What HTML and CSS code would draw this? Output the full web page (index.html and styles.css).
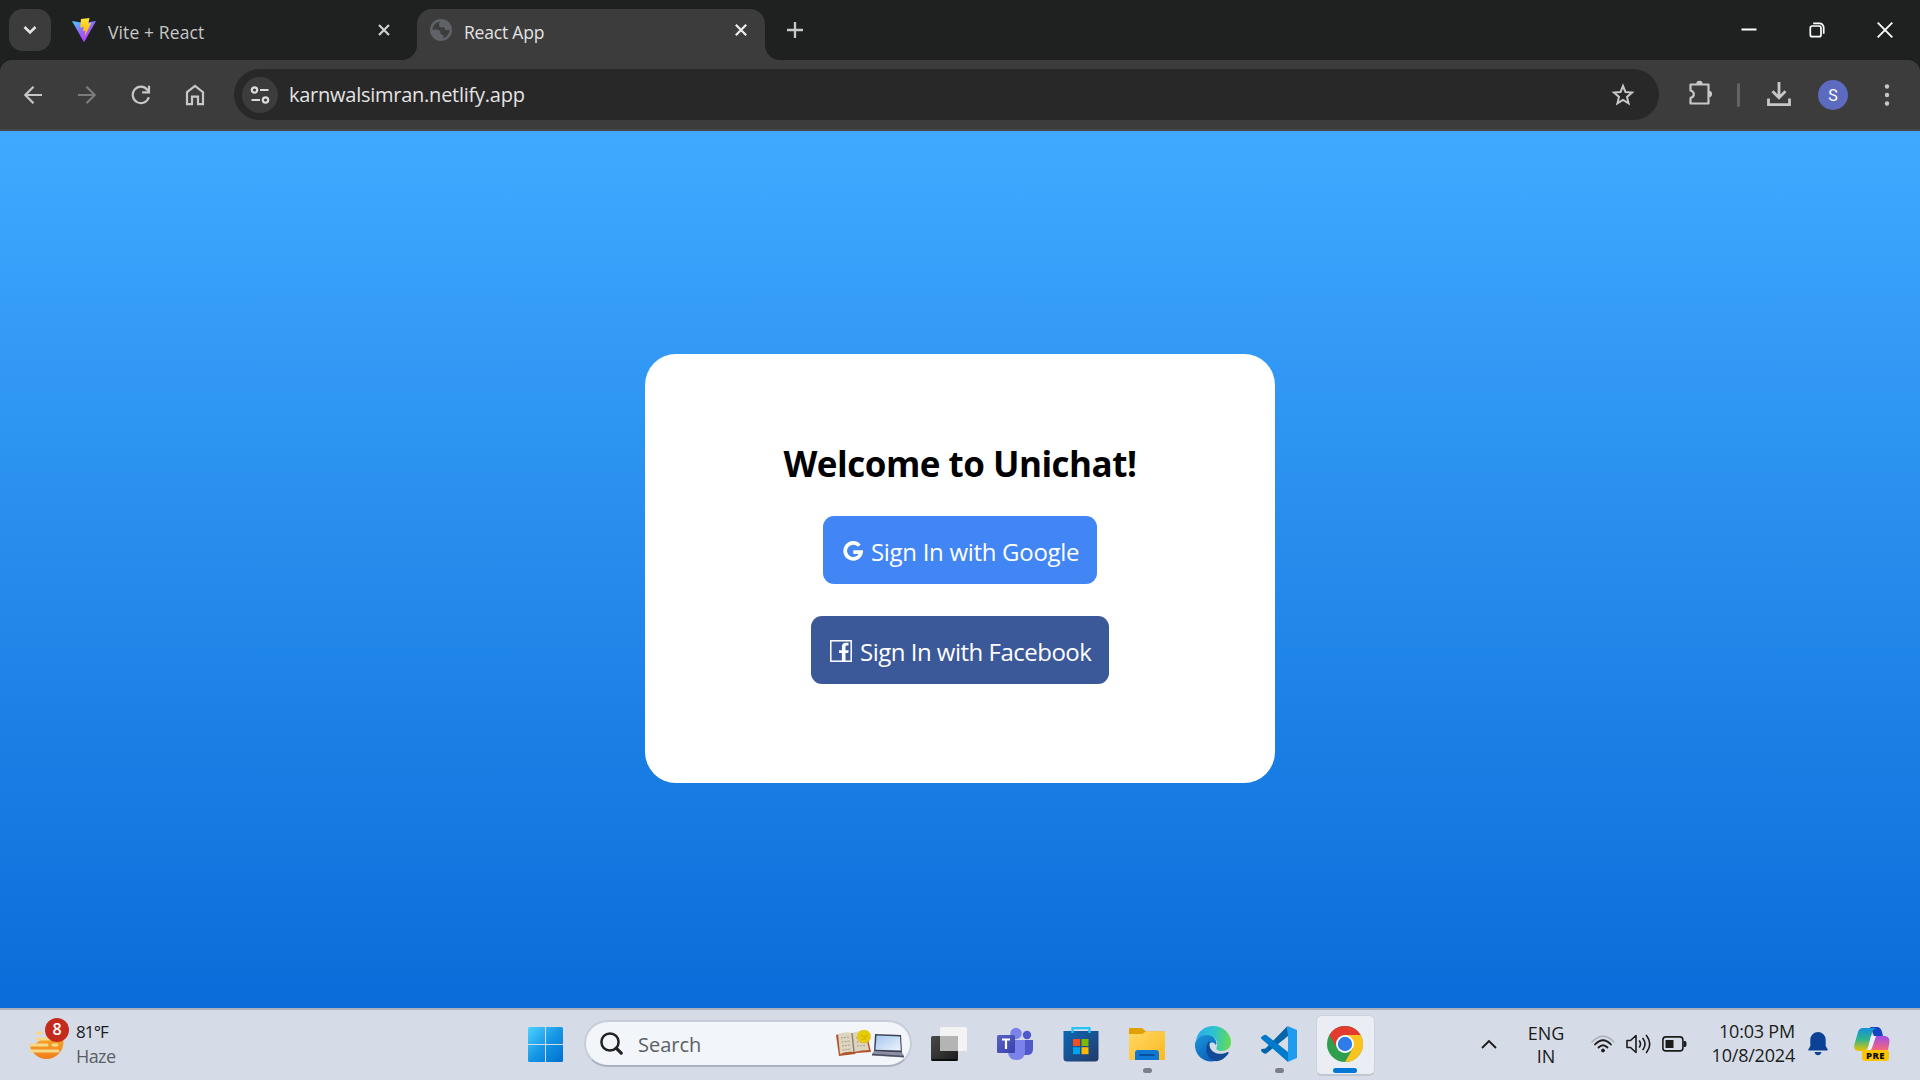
FILE: index.html
```html
<!DOCTYPE html>
<html lang="en">
<head>
<meta charset="utf-8">
<title>React App</title>
<link rel="stylesheet" href="styles.css">
</head>
<body>
<div class="screen">
  <header class="tabstrip">
    <div class="tab-search"><svg width="14" height="10" viewBox="0 0 14 10"><path d="M1.500 2l5.500 5.500L12.500 2" fill="none" stroke="#e3e3e3" stroke-width="2.600"/></svg></div>
    <div class="tab">
      <svg width="24" height="24" viewBox="0 0 24 24">
        <defs>
          <linearGradient id="va" x1="0" y1="0" x2=".6" y2="1"><stop offset="0" stop-color="#41d1ff"/><stop offset=".5" stop-color="#8f6cff"/><stop offset="1" stop-color="#bd34fe"/></linearGradient>
          <linearGradient id="vb" x1="0" y1="0" x2="0" y2="1"><stop offset="0" stop-color="#ffe83d"/><stop offset="1" stop-color="#ffa800"/></linearGradient>
        </defs>
        <path d="M0 3l12 2 12-2-11.5 20.6q-.5.8-1 0z" fill="url(#va)"/>
        <path d="M9 1l8.5-1-1.2 5.4 3-.6-6.6 14 .8-6.3-2.6.7.8-4.4-3.5.8z" fill="url(#vb)"/>
      </svg>
      <span class="tab-title tab-title-vite">Vite + React</span>
      <svg class="tab-close" width="12" height="12" viewBox="0 0 12 12"><path d="M1 1l10 10M11 1L1 11" stroke="#d0d0d0" stroke-width="2.2"/></svg>
    </div>
    <div class="tab tab-active">
      <svg width="22" height="22" viewBox="0 0 22 22"><circle cx="11" cy="11" r="9.8" fill="#3c3c3c" stroke="#5f6368" stroke-width="2.4"/><path d="M11 1.5C9 4 8.500 5 9.500 7.500c1 1.500 3 .5 4.500 1 1.500.6.500 2.500 2.500 2.800 1.500.2 2.500-.8 4-.3C21 5 17 1 11 1.500zM1.500 11c3-1 7-.8 8.500 1 1 1.500-.5 2.500 1 3.300 1.500.7 3 1 2.500 2.700-.4 1.500-2.500 1.500-3 2.700C5 20 1.300 16 1.500 11z" fill="#5f6368"/></svg>
      <span class="tab-title">React App</span>
      <svg class="tab-close" width="12" height="12" viewBox="0 0 12 12"><path d="M.8.8l10.400 10.400M11.200.8L.8 11.200" stroke="#eee" stroke-width="2.200"/></svg>
    </div>
    <svg class="new-tab" width="16" height="16" viewBox="0 0 16 16"><path d="M8 0v16M0 8h16" stroke="#c8c8c8" stroke-width="2.300"/></svg>
    <div class="window-controls">
      <svg width="16" height="16" viewBox="0 0 16 16"><path d="M.5 7.500h15" stroke="#fff" stroke-width="2"/></svg>
      <svg width="16" height="16" viewBox="0 0 16 16" fill="none" stroke="#fff" stroke-width="1.700"><rect x="1.300" y="4" width="10.700" height="10.700" rx="2"/><path d="M4.200 1.400h6.300a4.200 4.200 0 0 1 4.200 4.200v6.200"/></svg>
      <svg width="16" height="16" viewBox="0 0 16 16"><path d="M.7.7l14.600 14.600M15.300.7L.7 15.300" stroke="#fff" stroke-width="1.800"/></svg>
    </div>
  </header>
  <nav class="toolbar">
    <div class="tool"><svg width="20" height="20" viewBox="0 0 20 20" fill="none" stroke="#c7c7c7" stroke-width="2.200"><path d="M19 10H2.500M10.500 1.800L2.300 10l8.200 8.200"/></svg></div>
    <div class="tool"><svg width="20" height="20" viewBox="0 0 20 20" fill="none" stroke="#7b7b7b" stroke-width="2.200"><path d="M1 10h16.500M9.500 1.800l8.200 8.200-8.200 8.200"/></svg></div>
    <div class="tool"><svg width="20" height="20" viewBox="0 0 20 20" fill="none" stroke="#c7c7c7" stroke-width="2.200"><path d="M17.800 12.200A8.200 8.200 0 1 1 16.300 4.700l1.500 1.800"/><path d="M18 .8v6.500h-6.800"/></svg></div>
    <div class="tool"><svg width="20" height="22" viewBox="0 0 20 22" fill="none" stroke="#c7c7c7" stroke-width="2.200"><path d="M2 8.200L10 2l8 6.200v12h-5v-7.500H7v7.500H2z"/></svg></div>
    <div class="omnibox">
      <div class="site-info"><svg width="20" height="18" viewBox="0 0 20 18" fill="none" stroke="#dcdcdc" stroke-width="2.200"><circle cx="4.500" cy="4" r="2.700"/><path d="M10 4h8.500M1.500 14H10"/><circle cx="15.500" cy="14" r="2.700"/></svg></div>
      <span class="url">karnwalsimran.netlify.app</span>
      <svg class="star" width="24" height="24" viewBox="0 0 24 24"><path d="M12 3l2.500 6.100 6.500.5-5 4.300 1.600 6.400L12 16.900l-5.600 3.400L8 13.900 3 9.600l6.500-.5z" fill="none" stroke="#c7c7c7" stroke-width="2"/></svg>
    </div>
    <div class="tool extensions"><svg width="26" height="26" viewBox="0 0 26 26"><path d="M4.500 4.500h17V23.500h-18v-5.500c4.500-1.500 4.500-6 0-7.500V4.500z" fill="none" stroke="#c7c7c7" stroke-width="2.200" stroke-linejoin="round"/><path d="M9.300 4a3.200 3.300 0 0 1 6.400 0zM22 10.700c4.200 0 4.200 6.400 0 6.400z" fill="#c7c7c7"/></svg></div>
    <div class="separator"></div>
    <div class="tool downloads"><svg width="24" height="26" viewBox="0 0 24 26" fill="none" stroke="#c7c7c7" stroke-width="2.800"><path d="M12 1v15M5.500 10.200l6.500 6.500 6.500-6.500M1.500 17.500v6.200h21v-6.200"/></svg></div>
    <div class="tool"><div class="avatar">S</div></div>
    <div class="tool"><svg width="6" height="24" viewBox="0 0 6 24" fill="#c7c7c7"><circle cx="3" cy="3.500" r="2.200"/><circle cx="3" cy="12" r="2.200"/><circle cx="3" cy="20.500" r="2.200"/></svg></div>
  </nav>
  <main class="page">
    <section class="card">
      <h2>Welcome to Unichat!</h2>
      <div class="button google">
        <svg width="20" height="20" viewBox="0 0 20 20"><path d="M16.300 4.600A8 8 0 1 0 18.100 11.200H10.300" fill="none" stroke="#fff" stroke-width="3.700"/></svg>
        <span>Sign In with Google</span>
      </div>
      <div class="button facebook">
        <svg width="22" height="22" viewBox="0 0 22 22"><rect x=".8" y=".8" width="20.400" height="20.400" fill="none" stroke="#fff" stroke-width="1.500"/><path d="M18.500 5.400h-1.700q-1.300 0-1.300 1.400v3.500h3.200l-.5 2.800h-2.700V21h-3.600v-7.900H9v-2.800h2.900V7q0-4.200 4.300-4.200h2.300z" fill="#fff"/></svg>
        <span>Sign In with Facebook</span>
      </div>
    </section>
  </main>
  <footer class="taskbar">
    <div class="weather">
      <div class="haze">
        <svg width="35" height="30" viewBox="0 0 35 30"><defs><linearGradient id="hz" x1="0" y1="0" x2="0" y2="1"><stop offset="0" stop-color="#fbc02d"/><stop offset="1" stop-color="#f07c1a"/></linearGradient></defs><circle cx="17.500" cy="12" r="17" fill="url(#hz)"/><path d="M0 0h35v0L22 9l-9 0-7 5H0z" fill="#d5dce7"/><g stroke="#f5d98a" stroke-width="3" stroke-linecap="round"><path d="M8 3h4M8 9h12M2 15h16M24 15h4M2 21h27" /></g></svg>
        <span class="badge">8</span>
      </div>
      <div class="weather-text"><span class="temp">81°F</span><span class="cond">Haze</span></div>
    </div>
    <svg class="start" width="35" height="35" viewBox="0 0 35 35"><defs><linearGradient id="wn" x1="0" y1="0" x2="1" y2="1"><stop offset="0" stop-color="#4fd3ff"/><stop offset=".5" stop-color="#1597e5"/><stop offset="1" stop-color="#006fd0"/></linearGradient></defs><path d="M1.500 0H17v17H0V1.500Q0 0 1.500 0zM18 0h15.500Q35 0 35 1.500V17H18zM0 18h17v17H1.500Q0 35 0 33.500zM18 18h17v15.500q0 1.500-1.500 1.500H18z" fill="url(#wn)"/></svg>
    <div class="search">
      <svg width="23" height="23" viewBox="0 0 23 23" fill="none" stroke="#222"><circle cx="10" cy="10" r="8.600" stroke-width="2.500"/><path d="M16.200 16.200l5 5" stroke-width="3.200" stroke-linecap="round"/></svg>
      <span>Search</span>
      <svg class="doodle" width="68" height="28" viewBox="0 0 68 28">
        <path d="M0 5l3-1 14 2 14-1 4 17-15 1-1 1-16 2z" fill="#b4522b"/>
        <path d="M2 4q8-3 14-1l2 19q-7-1-14 2zM16 3q7-3 13-1l4 18q-7 0-15 2z" fill="#ddd5c0"/>
        <path d="M16 3l2 19" stroke="#8f8468" stroke-width="1.500"/>
        <path d="M5 8l8-1M5.500 12l8-1M6 16l8-1M6.500 20l8-1M20 8l4-.5M20.500 12l8-.5M21 16l9-.5" stroke="#a8a08b" stroke-width="1" stroke-dasharray="2 1"/>
        <circle cx="28" cy="6.500" r="6.500" fill="#e8cb00" stroke="#e0c000" stroke-dasharray="2 1"/><path d="M25 5l4 2 3-2M26 9.500l4-1" stroke="#c9ab00" fill="none"/>
        <defs><linearGradient id="lp" x1="0" y1="0" x2="1" y2="1"><stop offset="0" stop-color="#a5c8f0"/><stop offset="1" stop-color="#eef3fb"/></linearGradient></defs>
        <path d="M39 4l26 1 1 18-28-1z" fill="#3b4256"/><path d="M40.500 5.500l23.500 1 .8 14-25.300-.7z" fill="url(#lp)"/>
        <path d="M38 21l28 1.500 2 3.500v1.500l-32-2V24z" fill="#8c8fa3"/><path d="M36 24.500l32 2" stroke="#4b4e62" stroke-width="1.500"/>
      </svg>
    </div>
    <div class="apps">
      <div class="app"><svg width="36" height="36" viewBox="0 0 36 36"><defs><linearGradient id="tv" x1="0" y1="0" x2="1" y2="1"><stop offset="0" stop-color="#4a4a4a"/><stop offset="1" stop-color="#1c1c1c"/></linearGradient></defs><rect y="10" width="27" height="25" rx="1.500" fill="url(#tv)"/><path d="M1 34h25" stroke="#050505" stroke-width="1.500"/><rect x="9" y="1" width="27" height="24" rx="1.500" fill="#f3f3f3"/><rect x="9" y="10" width="18" height="15" fill="#b4b4b4"/></svg></div>
      <div class="app"><svg width="36" height="34" viewBox="0 0 36 34"><defs><linearGradient id="tm" x1="0" y1="0" x2="1" y2="1"><stop offset="0" stop-color="#5a62c3"/><stop offset="1" stop-color="#3940ab"/></linearGradient></defs><circle cx="30" cy="8" r="4.200" fill="#5059c9"/><path d="M26 13h10v9q0 6-6 6h-4z" fill="#5059c9"/><circle cx="19" cy="6.500" r="5.700" fill="#7b83eb"/><path d="M11 13h17v11q0 9-8.500 9T11 24z" fill="#7b83eb"/><rect y="8" width="18" height="18" rx="1.500" fill="url(#tm)"/><path d="M5 12.500h8M9 12.500V22" stroke="#fff" stroke-width="2.200"/></svg></div>
      <div class="app"><svg width="36" height="36" viewBox="0 0 36 36"><defs><linearGradient id="st" x1="0" y1="0" x2="1" y2="1"><stop offset="0" stop-color="#0d67b8"/><stop offset="1" stop-color="#243a68"/></linearGradient></defs><path d="M.5 5h35v27q0 3.500-3.500 3.500H4Q.5 35.500.5 32z" fill="url(#st)"/><path d="M9.500 7V2.200h17V7" fill="none" stroke="#22c3f5" stroke-width="2.200"/><path d="M10 13h7v7h-7z" fill="#f25022"/><path d="M18.500 13h7v7h-7z" fill="#7fba00"/><path d="M10 21.200h7v7h-7z" fill="#00a4ef"/><path d="M18.500 21.200h7v7h-7z" fill="#ffb900"/></svg></div>
      <div class="app app-running"><svg width="36" height="34" viewBox="0 0 36 34"><defs><linearGradient id="fx" x1="0" y1="0" x2="1" y2="1"><stop offset="0" stop-color="#ffd867"/><stop offset="1" stop-color="#fcb91d"/></linearGradient></defs><path d="M0 2q0-1 1-1h12l4 3.500h18q1 0 1 1V10H0z" fill="#dfa000"/><path d="M0 7h13l4-2.500h19V32q0 1-1 1H1q-1 0-1-1z" fill="url(#fx)"/><path d="M6 33v-7q0-3 3-3h18q3 0 3 3v7z" fill="#0f78d4"/><path d="M11 28h14" stroke="#0a4f9c" stroke-width="2" stroke-linecap="round"/></svg></div>
      <div class="app"><svg width="36" height="36" viewBox="0 0 36 36"><defs><linearGradient id="e1" x1="0" y1=".3" x2="1" y2=".4"><stop offset="0" stop-color="#2aa9ec"/><stop offset=".5" stop-color="#2cc3cf"/><stop offset="1" stop-color="#64dc52"/></linearGradient><linearGradient id="e2" x1="0" y1="0" x2=".6" y2="1"><stop offset="0" stop-color="#1a96d8"/><stop offset="1" stop-color="#0b62bd"/></linearGradient></defs><path d="M1 14C3 5 10 0 18 0c10 0 18 7.500 18 16 0 6-4.500 9-9 9-4 0-6.500-1.500-5.500-3.500 1.500-3 1-7-2.500-9.500C13 8 5 9 1 14z" fill="url(#e1)"/><path d="M0 18C1 12 6 9 11.500 9c6 0 10 4 10 9l-1 1c-1-4-7-3-8 1.500C11 27 16 33 22 34.500 10 39-1 29 0 18z" fill="url(#e2)"/><path d="M14.500 15C9 20 10 34 22 35.300c5-.8 9-4 11.500-8 .5-1-.5-1.500-1.500-1-7 3.500-17 1-17.500-7.300 0-1.500.5-2.800 0-4z" fill="#114a96"/></svg></div>
      <div class="app app-running"><svg width="36" height="36" viewBox="0 0 36 36"><path d="M26.500 0L4.500 22.500l-4 .5q-.8 2 0 2.500l2.500 2 2 .3L27 10z" fill="#0065a9"/><path d="M27 36L0 12.500q-.4-1 .5-1.800L3.200 9q1-.6 2 0L27 26z" fill="#007acc"/><path d="M26.500 0L36 4v28l-9.500 4q-.8 0 .5-2V2z" fill="#1f9cf0"/></svg></div>
      <div class="app app-active"><svg width="36" height="36" viewBox="0 0 36 36"><circle cx="18" cy="18" r="18" fill="#2f9e4d"/><path d="M18 9h15.600A18 18 0 0 1 18 36l7.800-13.500z" fill="#fcc31e"/><path d="M33.600 9H18a9 9 0 0 0-7.800 13.500L2.400 9a18 18 0 0 1 31.200 0z" fill="#e33b2e"/><circle cx="18" cy="18" r="9" fill="#fff"/><circle cx="18" cy="18" r="7.200" fill="#2f7bea"/></svg></div>
    </div>
    <div class="tray">
      <svg class="chevron" width="16" height="10" viewBox="0 0 16 10"><path d="M1 9l7-7 7 7" fill="none" stroke="#1b1b1b" stroke-width="1.900"/></svg>
      <div class="lang"><span>ENG</span><span>IN</span></div>
      <svg class="wifi" width="24" height="18" viewBox="0 0 24 18" fill="none" stroke="#1b1b1b" stroke-width="1.800" stroke-linecap="round"><path d="M1 7q11-11.500 22 0" stroke="#a9afb8" stroke-width="1.300"/><path d="M4 9.500q8-8.500 16 0M7.500 12.500q4.500-4.500 9 0"/><circle cx="12" cy="15.500" r="1.500" fill="#1b1b1b" stroke-width="1"/></svg>
      <svg class="speaker" width="25" height="20" viewBox="0 0 25 20" fill="none" stroke="#1b1b1b" stroke-width="1.600" stroke-linecap="round"><path d="M1 6.500h3.500L10 1.500v17L4.500 13.500H1z" stroke-linejoin="round"/><path d="M13.500 7q2 3 0 6M17 4.500q4 5.500 0 11M20.500 1.500q6.500 8.500 0 17"/></svg>
      <svg class="battery" width="25" height="16" viewBox="0 0 25 16"><rect x=".9" y=".9" width="20" height="14" rx="3" fill="none" stroke="#1b1b1b" stroke-width="1.600"/><rect x="3.500" y="4" width="8" height="8" fill="#1b1b1b"/><path d="M21.500 5h1.500q1.500 0 1.500 3t-1.500 3h-1.500z" fill="#1b1b1b"/></svg>
      <div class="clock"><span>10:03 PM</span><span>10/8/2024</span></div>
      <svg class="bell" width="20" height="24" viewBox="0 0 20 24"><path d="M10 0a7.700 7.700 0 0 1 7.700 7.700V14l2 3.500q.5 1-.6 1H.9q-1.100 0-.6-1l2-3.500V7.700A7.700 7.700 0 0 1 10 0zM6.500 20h7q-1 3.300-3.500 3.300T6.500 20z" fill="#0b4296"/></svg>
      <div class="copilot">
        <svg width="36" height="32" viewBox="0 0 36 32"><defs><linearGradient id="c1" x1="0" y1="0" x2="0" y2="1"><stop offset="0" stop-color="#1590dc"/><stop offset=".5" stop-color="#2fb48c"/><stop offset="1" stop-color="#f0c400"/></linearGradient><linearGradient id="c2" x1="0" y1="0" x2="0" y2="1"><stop offset="0" stop-color="#a24de8"/><stop offset="1" stop-color="#fb6a6c"/></linearGradient></defs><path d="M16 0h8q3 1 4 5l1 4h-9z" fill="#1546c0"/><path d="M9 1h13q-3 1-4 5l-4 14q-1 4-6 4H4q-5-1-3.500-7L4 5q1-4 5-4z" fill="url(#c1)"/><path d="M22 9h9q5 1 4.500 6L34 23H20l-12 1h3q4 0 6-5z" fill="url(#c2)"/><path d="M17 9h5l-4 12q-1 3-5 3 1-1 1.500-4z" fill="#eef0f7"/></svg>
        <span class="pre">PRE</span>
      </div>
    </div>
  </footer>
</div>
</body>
</html>
```
FILE: styles.css
```css
* { box-sizing: border-box; }
body {
  margin: 0;
  font-family: "Open Sans", "Noto Sans", sans-serif;
}
svg { display: block; flex: none; }
.screen {
  width: 1920px;
  height: 1080px;
  display: flex;
  flex-direction: column;
  overflow: hidden;
  background: #1f2120;
}

/* tab strip */
.tabstrip {
  height: 60px;
  display: flex;
  align-items: flex-end;
  background: #1f2120;
  padding-left: 9px;
}
.tab-search {
  width: 42px;
  height: 42px;
  margin-bottom: 9px;
  border-radius: 14px;
  background: #3c3c3c;
  display: flex;
  align-items: center;
  justify-content: center;
}
.tab {
  position: relative;
  width: 366px;
  height: 51px;
  padding: 0 27px 9px 21px;
  display: flex;
  align-items: center;
  color: #c6c7c6;
}
.tab-title {
  flex: 1;
  margin-left: 12px;
  padding-top: 3px;
  font-size: 17.5px;
  line-height: 24px;
  letter-spacing: -0.2px;
}
.tab-title-vite { letter-spacing: 0.12px; }
.tab-active {
  width: 348px;
  padding: 0 18px 9px 13px;
  border-radius: 15px 15px 0 0;
  background: #3c3c3c;
  color: #e3e3e3;
}
.tab-active::before,
.tab-active::after {
  content: "";
  position: absolute;
  bottom: 0;
  width: 15px;
  height: 15px;
}
.tab-active::before {
  left: -15px;
  background: radial-gradient(circle at 0 0, transparent 14.5px, #3c3c3c 15.5px);
}
.tab-active::after {
  right: -15px;
  background: radial-gradient(circle at 100% 0, transparent 14.5px, #3c3c3c 15.5px);
}
.tab-active .tab-title { margin-left: 12px; }
.new-tab { margin: 0 0 22px 22px; }
.window-controls {
  flex: 1;
  display: flex;
  justify-content: flex-end;
  gap: 52px;
  padding: 0 27px 22px 0;
}

/* toolbar */
.toolbar {
  height: 71px;
  display: flex;
  align-items: center;
  padding-left: 6px;
  background: #3c3c3c;
  border-bottom: 2px solid #484848;
  border-radius: 12px 12px 0 0;
}
.tool {
  width: 54px;
  height: 40px;
  display: flex;
  align-items: center;
  justify-content: center;
}
.omnibox {
  width: 1425px;
  height: 51px;
  margin-left: 12px;
  padding: 0 24px 0 8px;
  border-radius: 26px;
  background: #282828;
  display: flex;
  align-items: center;
}
.site-info {
  width: 36px;
  height: 36px;
  border-radius: 50%;
  background: #3c3c3c;
  display: flex;
  align-items: center;
  justify-content: center;
}
.url {
  flex: 1;
  margin-left: 11px;
  color: #e3e3e3;
  font-size: 20px;
  letter-spacing: -0.25px;
}
.extensions { margin-left: 14px; padding-bottom: 3px; }
.separator {
  width: 3px;
  height: 24px;
  margin: 0 12px 0 10px;
  border-radius: 2px;
  background: #636363;
}
.downloads { padding-bottom: 1px; }
.avatar {
  width: 30px;
  height: 30px;
  border-radius: 50%;
  background: #5c6bc0;
  color: #fff;
  font: 16px/31px Roboto, sans-serif;
  text-align: center;
}

/* page */
.page {
  height: 877px;
  padding-top: 223px;
  background: linear-gradient(0deg, #096dd9, #40a9ff);
}
.card {
  width: 630px;
  height: 429px;
  margin: 0 auto;
  padding-top: 86px;
  border-radius: 31px;
  background: #fff;
  display: flex;
  flex-direction: column;
  align-items: center;
}
h2 {
  margin: 0 0 28px;
  font-size: 35px;
  line-height: 48px;
  font-weight: 700;
  letter-spacing: -0.5px;
  color: #000;
}
.button {
  height: 68px;
  padding-top: 2px;
  border-radius: 11px;
  color: #fff;
  font-size: 24px;
  line-height: 34px;
  display: flex;
  align-items: center;
  gap: 8px;
  padding-left: 20px;
}
.button span { padding-top: 1px; }
.google {
  width: 274px;
  margin-bottom: 32px;
  background: #4285f4;
  letter-spacing: -0.3px;
}
.facebook {
  width: 298px;
  padding-left: 19px;
  gap: 8px;
  background: #3b5998;
  letter-spacing: -0.5px;
}

/* taskbar */
.taskbar {
  height: 72px;
  border-top: 2px solid #a9b1ba;
  background: #d5dce7;
  display: flex;
  align-items: center;
}
.weather {
  width: 528px;
  padding-left: 29px;
  display: flex;
  align-items: center;
}
.haze { position: relative; }
.badge {
  position: absolute;
  left: 16px;
  top: -12px;
  width: 24px;
  height: 24px;
  border-radius: 50%;
  background: #c42b1c;
  color: #fff;
  font-size: 16px;
  font-weight: 600;
  line-height: 23px;
  text-align: center;
}
.weather-text,
.lang,
.clock {
  display: flex;
  flex-direction: column;
  font-size: 18px;
  line-height: 24px;
  padding-bottom: 4px;
  color: #1b1b1b;
}
.weather-text { margin-left: 12px; padding-bottom: 3px; }
.temp { font-size: 17px; letter-spacing: -0.9px; }
.cond { letter-spacing: -0.6px; color: #5b5f66; }
.start { margin-bottom: 1px; }
.search {
  width: 328px;
  height: 47px;
  margin-left: 21px;
  margin-bottom: 3px;
  padding: 0 6px 0 14px;
  border: 2px solid #c6ceda;
  border-bottom-color: #a9b3c0;
  border-radius: 24px;
  background: #f2f5f9;
  display: flex;
  align-items: center;
  font-size: 20px;
  color: #5c5f63;
}
.search span { flex: 1; margin-left: 15px; padding-top: 1px; }
.apps { display: flex; margin: 0 0 2px 4px; }
.app {
  position: relative;
  width: 66px;
  height: 58px;
  display: flex;
  align-items: center;
  justify-content: center;
}
.app svg { position: relative; }
.app-running::after,
.app-active::after {
  content: "";
  position: absolute;
  left: 29px;
  bottom: 0;
  width: 9px;
  height: 5px;
  border-radius: 3px;
  background: #7b8088;
}
.app-active::after {
  left: 21px;
  width: 24px;
  background: #0078d4;
}
.app-active::before {
  content: "";
  position: absolute;
  left: 4px;
  top: 0;
  width: 57px;
  height: 58px;
  border: 1px solid #cdd3dd;
  border-bottom: 2px solid #c0c7d1;
  border-radius: 6px;
  background: #eaedf3;
}
.tray {
  display: flex;
  align-items: center;
  padding-left: 103px;
}
.tray > svg { margin-bottom: 2px; }
.lang {
  width: 60px;
  margin-left: 19px;
  line-height: 23px;
  padding-bottom: 1px;
  align-items: center;
}
.wifi { margin-left: 15px; }
.speaker { margin-left: 11px; }
.battery { margin-left: 11px; }
.clock {
  width: 108px;
  align-items: flex-end;
  letter-spacing: -0.2px;
}
.bell { margin-left: 13px; }
.copilot {
  position: relative;
  margin: 0 0 4px 26px;
}
.pre {
  position: absolute;
  left: 8px;
  top: 23px;
  width: 27px;
  height: 11px;
  border-radius: 3px;
  background: #fcc400;
  color: #111;
  font-size: 9.5px;
  font-weight: 800;
  line-height: 11px;
  letter-spacing: 0.5px;
  text-align: center;
}
```
